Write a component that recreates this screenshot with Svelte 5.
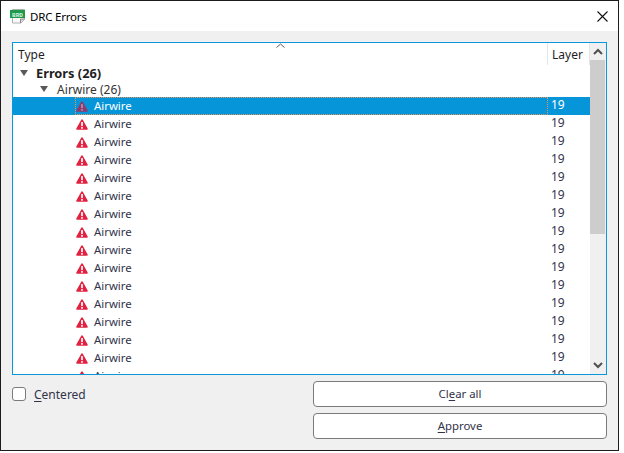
<script>
  // 15 leaf rows fit, the last one is cut off by the tree's bottom edge
  const errors = Array.from({ length: 16 }, (_, i) => ({ id: i, name: "Airwire", layer: 19 }));
  let selected = $state(0);
  let centered = $state(false);
</script>

{#snippet warning(dim)}
  <svg class="warn" width="12" height="11" viewBox="0 0 14 13">
    <path d="M7 .3c.4 0 .7.2.9.6l5.8 10.2c.4.7 0 1.600-.8 1.600H1.100c-.8 0-1.200-.9-.8-1.600L6.100.9c.2-.4.5-.6.9-.6z" fill={dim ? "#8f3a6c" : "#e2203f"} />
    <rect x="6" y="3.600" width="2" height="4.800" fill={dim ? "#b48fb4" : "#fff"} />
    <rect x="6" y="9.500" width="2" height="2" fill={dim ? "#b48fb4" : "#fff"} />
  </svg>
{/snippet}

<div class="window">
  <div class="titlebar">
    <svg class="app-icon" width="15" height="15" viewBox="0 0 15 15">
      <path d="M2.500.5h12v10l-3.500 3.500h-8.500z" fill="#fbfbfb" stroke="#b0b0b0" />
      <path d="M10.500 14v-4h4" fill="#d8d8d8" stroke="#8a8a8a" />
      <rect x="0" y="1" width="15" height="8" fill="#1f9a4c" />
      <text x="7.500" y="7.500" class="brd">BRD</text>
    </svg>
    <span class="title">DRC Errors</span>
    <svg class="close" width="11" height="11" viewBox="0 0 11 11">
      <path d="M.5.5l10 10M10.500.5l-10 10" stroke="#111" stroke-width="1.100" fill="none" />
    </svg>
  </div>

  <div class="content">
    <div class="tree">
      <div class="table">
        <div class="header">
          <div class="col-type">
            Type
            <svg class="sort" width="9" height="5" viewBox="0 0 9 5">
              <path d="M.5 4.500l4-3.500 4 3.500" stroke="#5c5c5c" fill="none" />
            </svg>
          </div>
          <div class="col-layer">Layer</div>
        </div>
        <div class="group">
          <span class="arrow"></span>
          <b>Errors (26)</b>
        </div>
        <div class="group sub">
          <span class="arrow"></span>
          Airwire (26)
        </div>
        {#each errors as err, i (err.id)}
          <button class="row" class:active={selected === i} onclick={() => (selected = i)}>
            <span class="cell-name">
              {@render warning(selected === i)}
              <span class="label">{err.name}</span>
            </span>
            <span class="cell-layer">{err.layer}</span>
          </button>
        {/each}
      </div>
      <div class="scrollbar">
        <svg class="step" width="16" height="17" viewBox="0 0 16 17">
          <path d="M4 11l4-4 4 4" stroke="#505050" stroke-width="2" fill="none" />
        </svg>
        <div class="track"><div class="thumb"></div></div>
        <svg class="step" width="16" height="17" viewBox="0 0 16 17">
          <path d="M4 6l4 4 4-4" stroke="#505050" stroke-width="2" fill="none" />
        </svg>
      </div>
    </div>

    <div class="footer">
      <label class="check">
        <input type="checkbox" bind:checked={centered} />
        <span class="box"></span>
        <span><u>C</u>entered</span>
      </label>
      <div class="actions">
        <button class="btn">Cl<u>e</u>ar all</button>
        <button class="btn"><u>A</u>pprove</button>
      </div>
    </div>
  </div>
</div>

<style>
  :global(body) {
    background: #fff;
  }
  .window {
    width: 619px;
    height: 451px;
    box-sizing: border-box;
    border: 1px solid #1c1c1c;
    background: #f0f0f0;
    display: flex;
    flex-direction: column;
    font: 12px "Noto Sans", "Open Sans", sans-serif;
    color: #1e1e1e;
  }
  .titlebar {
    height: 30px;
    flex: none;
    background: #fff;
    display: flex;
    align-items: center;
    padding: 0 10px 0 9px;
  }
  .app-icon {
    margin-right: 5px;
  }
  .brd {
    font: bold 6px "Liberation Mono", monospace;
    fill: #d9f3df;
    text-anchor: middle;
  }
  .title {
    flex: 1;
    color: #000;
    font-size: 11.5px;
    letter-spacing: -0.2px;
  }
  .content {
    flex: 1;
    padding: 11px 11px 0;
    display: flex;
    flex-direction: column;
    gap: 6px;
  }
  .tree {
    height: 333px;
    box-sizing: border-box;
    border: 1px solid #0a98dc;
    background: #fff;
    display: flex;
    overflow: hidden;
  }
  .table {
    flex: 1;
    min-width: 0;
    overflow: hidden;
  }
  .header {
    height: 22px;
    display: flex;
  }
  .col-type {
    flex: 1;
    padding: 3px 0 0 5px;
    border-right: 1px solid #e5e5e5;
    position: relative;
  }
  .sort {
    position: absolute;
    left: 263px;
    top: 0;
  }
  .col-layer {
    width: 42px;
    padding: 3px 0 0 4px;
    box-sizing: border-box;
    border-right: 1px solid #e5e5e5;
  }
  .group {
    height: 16px;
    line-height: 15px;
    display: flex;
    align-items: center;
    gap: 8px;
    padding-left: 7px;
    white-space: pre;
  }
  .group b {
    font-size: 12.8px;
  }
  .group.sub {
    padding-left: 27px;
    gap: 6px;
    color: #333;
  }
  .arrow {
    width: 0;
    height: 0;
    border: 4px solid transparent;
    border-top: 6px solid #595959;
    border-bottom: 0;
  }
  .row {
    all: unset;
    display: flex;
    width: 100%;
    height: 18px;
    line-height: 18px;
    color: #33334a;
  }
  .row.active {
    background: #0695d8;
    color: #fff;
  }
  .cell-name {
    flex: 1;
    box-sizing: border-box;
    margin-left: 62px;
    padding-left: 1px;
    display: flex;
    align-items: center;
    gap: 6px;
  }
  .label {
    font-size: 11.4px;
  }
  .row.active .cell-name {
    outline: 1px dotted #e8955a;
    outline-offset: -1px;
  }
  .cell-layer {
    width: 42px;
    padding-left: 3px;
    box-sizing: border-box;
    line-height: 16px;
  }
  .scrollbar {
    width: 16px;
    flex: none;
    background: #f0f0f0;
    display: flex;
    flex-direction: column;
  }
  .step {
    flex: none;
    display: block;
  }
  .track {
    flex: 1;
  }
  .thumb {
    height: 174px;
    width: 15px;
    background: #cdcdcd;
  }
  .footer {
    display: grid;
    grid-template-columns: 1fr 294px;
    column-gap: 7px;
  }
  .check {
    display: flex;
    align-items: center;
    gap: 8px;
    height: 26px;
    color: #33334a;
  }
  .check input {
    position: absolute;
    opacity: 0;
    pointer-events: none;
  }
  .box {
    width: 14px;
    height: 14px;
    box-sizing: border-box;
    border: 1px solid #7a7a7a;
    border-radius: 3px;
    background: #fff;
  }
  .actions {
    display: flex;
    flex-direction: column;
    gap: 6px;
  }
  .btn {
    height: 26px;
    box-sizing: border-box;
    border: 1px solid #7a7a7a;
    border-radius: 4px;
    background: #fff;
    padding: 0 0 1px;
    font: inherit;
    font-size: 11.4px;
    color: #33334a;
  }
  u {
    text-underline-offset: 2px;
  }
</style>
